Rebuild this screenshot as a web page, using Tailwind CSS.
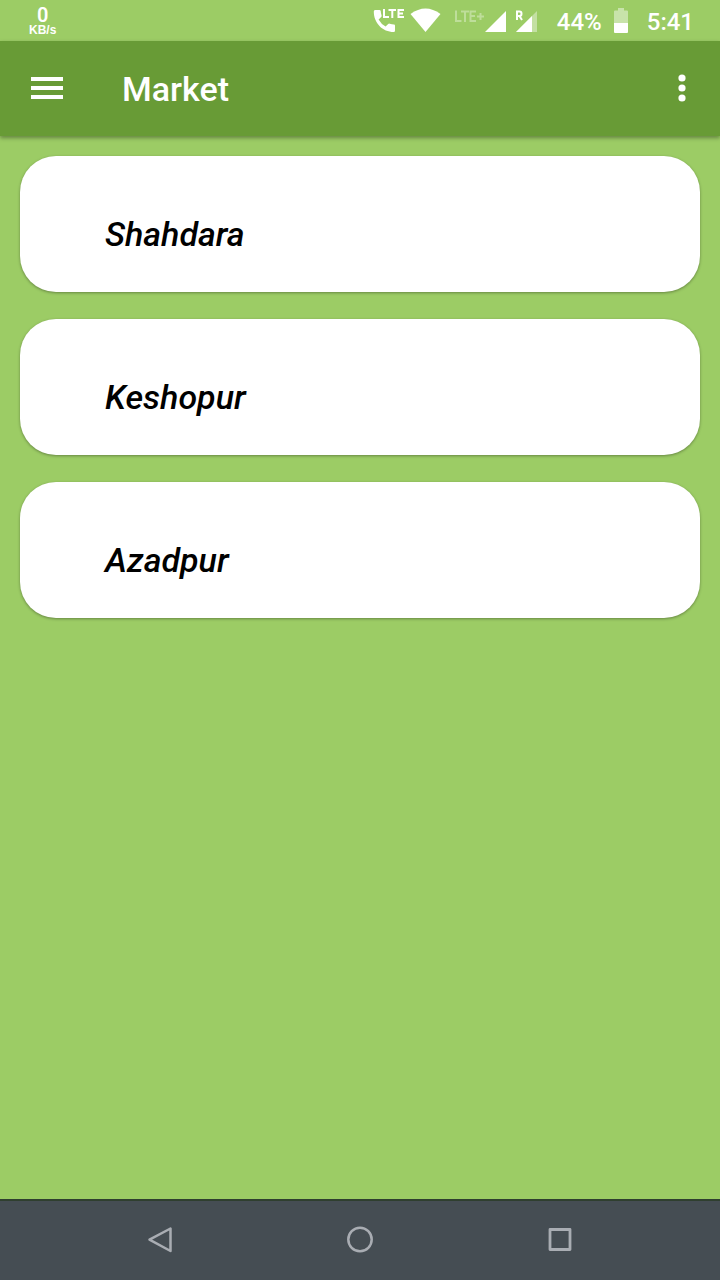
<!DOCTYPE html>
<html lang="en">
<head>
<meta charset="utf-8">
<meta name="viewport" content="width=device-width, initial-scale=1">
<title>Market</title>
<script src="https://cdn.jsdelivr.net/npm/@tailwindcss/browser@4"></script>
</head>
<body class="flex min-h-screen flex-col bg-[#9ccc65] font-['Roboto',sans-serif] text-white">
  <div class="flex h-[41px] items-center justify-between pr-[26px] pl-[29px]">
    <div class="flex flex-col items-center">
      <span class="text-[20px] leading-[18px] font-semibold">0</span>
      <span class="font-['Liberation_Sans',sans-serif] text-[12px] leading-[12px] font-bold">KB/s</span>
    </div>
    <div class="flex items-center text-[24px] font-medium">
      <svg class="h-[41px] w-[164px]" viewBox="374 0 164 41" role="img" aria-label="LTE call, Wi-Fi, mobile signal">
        <path fill="#fff" d="M376 10H380.500Q381.500 10 381.700 11Q381.900 13.500 382.600 15.500Q382.800 16.300 382.200 17L379.600 19.600Q382.200 24.300 386.600 26.600L389.200 24Q389.800 23.400 390.700 23.700Q393 24.500 395 24.500Q396 24.600 396 25.700V30.500Q396 32 394.800 32C383.500 32 374.800 23 374.800 11.500Q374.800 10 376 10Z"/>
        <g fill="none" stroke="#fff" stroke-width="2"><path d="M385 9V17H390M389.500 10H397M393.300 10V18M405 10H399.500V17H405M399.500 13.500H404"/></g>
        <path fill="#fff" d="M411.500 14Q426.500 3 441.500 14L426.500 32Z"/>
        <g fill="none" stroke="#fff" stroke-opacity=".35" stroke-width="2"><path d="M457 10.500V21H462.500M462 11.500H470M466 11.500V22M477 11.500H471.500V21H477M471.500 16H476M478 16.500H485M481.500 13V20"/></g>
        <path fill="#fff" d="M486 32L507 11V32Z"/>
        <path fill="#fff" fill-opacity=".4" d="M517 32L538 11V32Z"/>
        <path fill="#fff" d="M517 32L533 16V32Z"/>
        <path fill="none" stroke="#fff" stroke-width="2" d="M518 20V11.500H520.500Q522.500 11.500 522.500 13.700Q522.500 16 520.500 16H518M520.500 16L523 20"/>
      </svg>
      <span class="ml-5 pt-[2px]">44%</span>
      <svg class="ml-3 h-[41px] w-[14px]" viewBox="614 0 14 41" role="img" aria-label="Battery">
        <path fill="#fff" fill-opacity=".45" d="M618 8H624V10.500H627Q628 10.500 628 11.500V23H614V11.500Q614 10.500 615 10.500H618Z"/>
        <path fill="#fff" d="M614 23H628V32Q628 33 627 33H615Q614 33 614 32Z"/>
      </svg>
      <time class="ml-[19px] pt-[2px]">5:41</time>
    </div>
  </div>

  <header class="relative flex h-[95px] items-center bg-[#689b36] pr-4 pb-[2px] pl-[31px] shadow-[0_2px_4px_rgba(0,0,0,0.35)]">
    <button type="button" aria-label="Open menu">
      <svg class="h-8 w-8" viewBox="0 0 32 32" fill="#fff"><path d="M0 5H32V9H0ZM0 14H32V18H0ZM0 23H32V27H0Z"/></svg>
    </button>
    <h1 class="ml-[59px] flex-1 pt-[2px] text-[34px] leading-10 font-medium">Market</h1>
    <button type="button" class="flex w-11 justify-center" aria-label="More options">
      <svg class="h-8 w-8" viewBox="0 0 32 32" fill="#fff"><circle cx="16" cy="6" r="3.600"/><circle cx="16" cy="16" r="3.600"/><circle cx="16" cy="26" r="3.600"/></svg>
    </button>
  </header>

  <main class="flex-1 px-5 pt-5">
    <ul class="flex flex-col gap-[27px] text-[34px] leading-10 font-medium text-black italic">
      <li><button type="button" class="block w-full rounded-[36px] bg-white pt-[58px] pb-[38px] pl-[85px] text-left shadow-[0_1px_3px_rgba(0,0,0,0.35)]">Shahdara</button></li>
      <li><button type="button" class="block w-full rounded-[36px] bg-white pt-[58px] pb-[38px] pl-[85px] text-left shadow-[0_1px_3px_rgba(0,0,0,0.35)]">Keshopur</button></li>
      <li><button type="button" class="block w-full rounded-[36px] bg-white pt-[58px] pb-[38px] pl-[85px] text-left shadow-[0_1px_3px_rgba(0,0,0,0.35)]">Azadpur</button></li>
    </ul>
  </main>

  <nav class="flex h-[81px] items-center justify-center gap-[168px] border-t-2 border-[#2f3f2f] bg-[#454d53] pb-[2px]" aria-label="System navigation">
    <button type="button" aria-label="Back"><svg class="h-8 w-8" viewBox="0 0 32 32" fill="none" stroke="#a9adb3" stroke-width="2.500" stroke-linejoin="round"><path d="M26.500 4.500V27L5.500 15.700Z"/></svg></button>
    <button type="button" aria-label="Home"><svg class="h-8 w-8" viewBox="0 0 32 32" fill="none" stroke="#a9adb3" stroke-width="2.500"><circle cx="16" cy="15.500" r="11.700"/></svg></button>
    <button type="button" aria-label="Recent apps"><svg class="h-8 w-8" viewBox="0 0 32 32" fill="none" stroke="#a9adb3" stroke-width="2.800" stroke-linejoin="round"><path d="M6 5.500H26V25.500H6Z"/></svg></button>
  </nav>
</body>
</html>
